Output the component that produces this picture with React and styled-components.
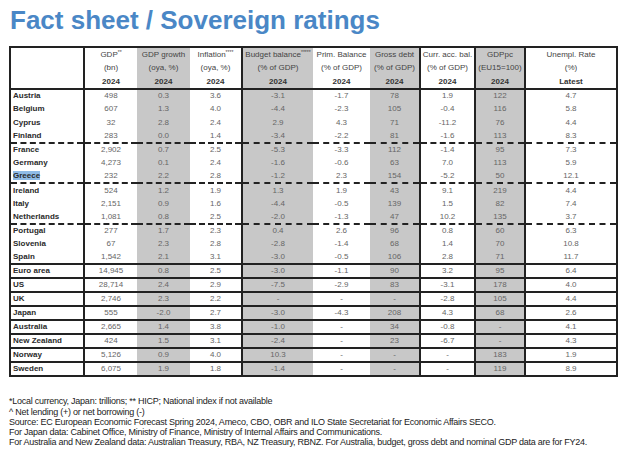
import React from "react";
import styled, { createGlobalStyle } from "styled-components";

const GlobalStyle = createGlobalStyle`
  html, body {
    margin: 0;
    padding: 0;
    background: #ffffff;
    font-family: "Liberation Sans", Arial, sans-serif;
  }
`;

const Page = styled.div`
  width: 624px;
  height: 452px;
  padding: 5px 0 0 9px;
  box-sizing: border-box;
  overflow: hidden;
`;

const Title = styled.h1`
  margin: 0 0 11px 1px;
  font-size: 26px;
  line-height: 30px;
  font-weight: bold;
  color: #4a87c6;
  letter-spacing: 0;
`;

const Table = styled.table`
  border-collapse: collapse;
  table-layout: fixed;
  width: 607px;
  border: 2px solid #222;
  font-size: 8px;
  color: #666;
`;

const Col = styled.col`
  width: ${(p) => p.$w}px;
  background: ${(p) => (p.$shade ? "#c8c8c8" : "transparent")};
`;

const HeadCell = styled.th`
  padding: 0;
  height: 38px;
  font-weight: normal;
  color: #444;
  text-align: center;
  vertical-align: middle;
  line-height: 13.3px;
  border-left: ${(p) => (p.$line ? "2px solid #222" : "none")};
  border-bottom: 2px solid #222;
  white-space: nowrap;
  b {
    font-weight: bold;
    color: #333;
  }
`;

const Star = styled.span`
  font-size: 5px;
  vertical-align: top;
  line-height: 8px;
`;

const Row = styled.tr`
  height: ${(p) => (p.$solo ? 13.9 : 13.5)}px;
  border-top: ${(p) =>
    p.$solo ? "2px solid #222" : p.$group ? "2px dashed #222" : "none"};
`;

const Cell = styled.td`
  padding: 0;
  text-align: center;
  line-height: 12px;
  border-left: ${(p) => (p.$line ? "2px solid #222" : "none")};
`;

const Country = styled.td`
  padding: 0 0 0 2px;
  text-align: left;
  font-weight: bold;
  color: #2a2a2a;
  line-height: 12px;
  white-space: nowrap;
`;

const Selected = styled.span`
  background: #8fbbe6;
`;

const Notes = styled.div`
  margin-top: 19px;
  font-size: 9px;
  line-height: 10.2px;
  letter-spacing: -0.25px;
  color: #222;
  white-space: nowrap;
`;

const cols = [
  { w: 74 },
  { w: 53 },
  { w: 53, shade: true },
  { w: 52 },
  { w: 71, shade: true },
  { w: 57 },
  { w: 50, shade: true },
  { w: 55 },
  { w: 50, shade: true },
  { w: 92 },
];

// left border before these column indexes
const lines = [1, 4, 7, 8, 9];

const headers = [
  ["", "", ""],
  [<>GDP<Star>**</Star></>, "(bn)", "2024"],
  ["GDP growth", "(oya, %)", "2024"],
  [<>Inflation<Star>****</Star></>, "(oya, %)", "2024"],
  [<>Budget balance<Star>*****</Star></>, "(% of GDP)", "2024"],
  ["Prim. Balance", "(% of GDP)", "2024"],
  ["Gross debt", "(% of GDP)", "2024"],
  ["Curr. acc. bal.", "(% of GDP)", "2024"],
  ["GDPpc", "(EU15=100)", "2024"],
  ["Unempl. Rate", "(%)", "Latest"],
];

const rows = [
  ["Austria", "498", "0.3", "3.6", "-3.1", "-1.7", "78", "1.9", "122", "4.7"],
  ["Belgium", "607", "1.3", "4.0", "-4.4", "-2.3", "105", "-0.4", "116", "5.8"],
  ["Cyprus", "32", "2.8", "2.4", "2.9", "4.3", "71", "-11.2", "76", "4.4"],
  ["Finland", "283", "0.0", "1.4", "-3.4", "-2.2", "81", "-1.6", "113", "8.3"],
  ["France", "2,902", "0.7", "2.5", "-5.3", "-3.3", "112", "-1.4", "95", "7.3", "g"],
  ["Germany", "4,273", "0.1", "2.4", "-1.6", "-0.6", "63", "7.0", "113", "5.9"],
  ["Greece", "232", "2.2", "2.8", "-1.2", "2.3", "154", "-5.2", "50", "12.1", "sel"],
  ["Ireland", "524", "1.2", "1.9", "1.3", "1.9", "43", "9.1", "219", "4.4", "g"],
  ["Italy", "2,151", "0.9", "1.6", "-4.4", "-0.5", "139", "1.5", "82", "7.4"],
  ["Netherlands", "1,081", "0.8", "2.5", "-2.0", "-1.3", "47", "10.2", "135", "3.7"],
  ["Portugal", "277", "1.7", "2.3", "0.4", "2.6", "96", "0.8", "60", "6.3", "g"],
  ["Slovenia", "67", "2.3", "2.8", "-2.8", "-1.4", "68", "1.4", "70", "10.8"],
  ["Spain", "1,542", "2.1", "3.1", "-3.0", "-0.5", "106", "2.8", "71", "11.7"],
  ["Euro area", "14,945", "0.8", "2.5", "-3.0", "-1.1", "90", "3.2", "95", "6.4", "s"],
  ["US", "28,714", "2.4", "2.9", "-7.5", "-2.9", "83", "-3.1", "178", "4.0", "s"],
  ["UK", "2,746", "2.3", "2.2", "-", "-", "-", "-2.8", "105", "4.4", "s"],
  ["Japan", "555", "-2.0", "2.7", "-3.0", "-4.3", "208", "4.3", "68", "2.6", "s"],
  ["Australia", "2,665", "1.4", "3.8", "-1.0", "-", "34", "-0.8", "-", "4.1", "s"],
  ["New Zealand", "424", "1.5", "3.1", "-2.4", "-", "23", "-6.7", "-", "4.3", "s"],
  ["Norway", "5,126", "0.9", "4.0", "10.3", "-", "-", "-", "183", "1.9", "s"],
  ["Sweden", "6,075", "1.9", "1.8", "-1.4", "-", "-", "-", "119", "8.9", "s"],
];

const notes = [
  "*Local currency, Japan: trillions; ** HICP; National index if not available",
  "^ Net lending (+) or net borrowing (-)",
  "Source: EC European Economic Forecast Spring 2024, Ameco, CBO, OBR and ILO State Secretariat for Economic Affairs SECO.",
  "For Japan data: Cabinet Office, Ministry of Finance, Ministry of Internal Affairs and Communications.",
  "For Australia and New Zealand data: Australian Treasury, RBA, NZ Treasury, RBNZ. For Australia, budget, gross debt and nominal GDP data are for FY24.",
];

export default function App() {
  return (
    <Page>
      <GlobalStyle />
      <Title>Fact sheet / Sovereign ratings</Title>
      <Table>
        <colgroup>
          {cols.map((c, i) => (
            <Col key={i} $w={c.w} $shade={c.shade} />
          ))}
        </colgroup>
        <thead>
          <tr>
            {headers.map((h, i) => (
              <HeadCell key={i} $line={lines.includes(i)}>
                {h[0]}
                <br />
                {h[1]}
                <br />
                <b>{h[2]}</b>
              </HeadCell>
            ))}
          </tr>
        </thead>
        <tbody>
          {rows.map((r) => {
            const flag = r[10];
            return (
              <Row key={r[0]} $group={flag === "g"} $solo={flag === "s"}>
                <Country>
                  {flag === "sel" ? <Selected>{r[0]}</Selected> : r[0]}
                </Country>
                {r.slice(1, 10).map((v, i) => (
                  <Cell key={i} $line={lines.includes(i + 1)}>
                    {v}
                  </Cell>
                ))}
              </Row>
            );
          })}
        </tbody>
      </Table>
      <Notes>
        {notes.map((n) => (
          <div key={n}>{n}</div>
        ))}
      </Notes>
    </Page>
  );
}
